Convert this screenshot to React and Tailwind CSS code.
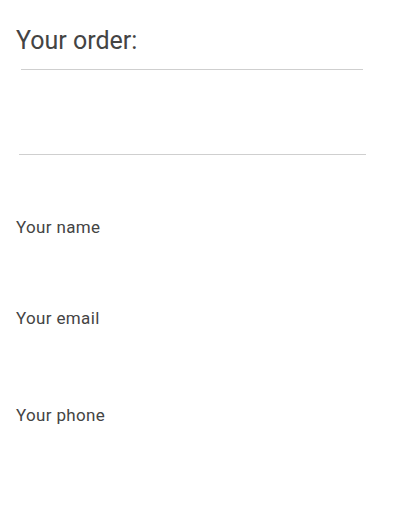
import React from 'react';

export default function App() {
  const font = { fontFamily: 'Roboto, "Liberation Sans", sans-serif' };
  return (
    <div className="w-[405px] h-[530px] bg-white overflow-hidden" style={font}>
      {/* Order */}
      <h2 className="pl-4 pt-[26px] text-[25px] leading-[30px] font-normal text-[#444]">Your order:</h2>
      <div className="mt-[13px] ml-[21px] w-[342px] h-px bg-[#cfcfcf]" />
      <div className="mt-[84px] ml-[19px] w-[347px] h-px bg-[#cfcfcf]" />

      {/* Contact fields */}
      <div className="pl-4 flex flex-col text-[17px] leading-[20px] tracking-[0.35px] text-[#444]">
        <label className="mt-[62px]">Your name</label>
        <label className="mt-[71px]">Your email</label>
        <label className="mt-[77px]">Your phone</label>
      </div>
    </div>
  );
}
